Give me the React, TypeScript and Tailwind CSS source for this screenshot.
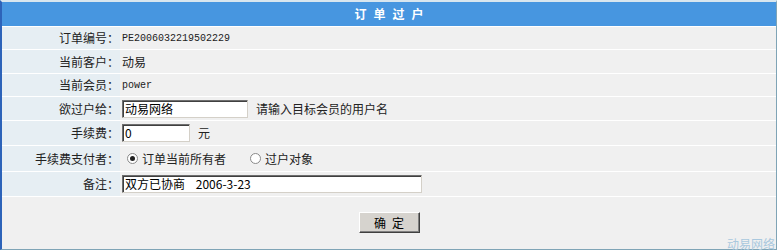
import React from "react";

const cjk = "font-['SimSun','Noto_Sans_CJK_SC',sans-serif]";

function Row({
  label,
  h,
  children,
}: {
  label: string;
  h: string;
  children: React.ReactNode;
}) {
  return (
    <div className={`flex ${h}`}>
      <div className="w-[118px] shrink-0 bg-[#e6eef3] flex items-center justify-end pr-[1px] text-[12px] text-[#222]">
        {label}
      </div>
      <div className="flex-1 bg-[#f0f0f0] flex items-center pl-[2px] text-[12px] text-[#222]">
        {children}
      </div>
    </div>
  );
}

function Radio({ checked }: { checked?: boolean }) {
  return (
    <span className="inline-flex items-center justify-center w-[11px] h-[11px] rounded-full border border-[#8a8a8a] bg-white mr-[4px]">
      {checked && <span className="w-[5px] h-[5px] rounded-full bg-[#222]" />}
    </span>
  );
}

export default function App() {
  return (
    <div className={`w-[780px] h-[251px] bg-white ${cjk}`}>
      <div className="relative w-[777px] h-[250px] border-l-2 border-l-[#2d63b9] border-t-2 border-t-[#d8e6ef] border-r border-r-[#7fa4b6] border-b border-b-[#7fa4b6] bg-white flex flex-col">
        <div className="h-[24px] bg-[#4796e0] flex items-center justify-center pl-[7px] text-white font-bold text-[12px] tracking-[7px]">
          订单过户
        </div>
        <div className="flex flex-col gap-px pt-px">
          <Row label="订单编号：" h="h-[22px]">
            <span className="font-['Liberation_Mono',monospace] text-[10px]">PE2006032219502229</span>
          </Row>
          <Row label="当前客户：" h="h-[23px]">动易</Row>
          <Row label="当前会员：" h="h-[22px]">
            <span className="font-['Liberation_Mono',monospace] text-[10px]">power</span>
          </Row>
          <Row label="欲过户给：" h="h-[23px]">
            <input
              readOnly
              value="动易网络"
              className="w-[126px] h-[18px] bg-white border border-t-[#6e6e6e] border-l-[#6e6e6e] border-r-[#d4d0c8] border-b-[#d4d0c8] shadow-[inset_1px_1px_0_#404040] px-[2px] text-[12px] text-black outline-none"
            />
            <span className="ml-[8px]">请输入目标会员的用户名</span>
          </Row>
          <Row label="手续费：" h="h-[24px]">
            <input
              readOnly
              value="0"
              className="w-[68px] h-[18px] bg-white border border-t-[#6e6e6e] border-l-[#6e6e6e] border-r-[#d4d0c8] border-b-[#d4d0c8] shadow-[inset_1px_1px_0_#404040] px-[2px] text-[12px] text-black outline-none"
            />
            <span className="ml-[8px]">元</span>
          </Row>
          <Row label="手续费支付者：" h="h-[25px]">
            <span className="ml-[5px] inline-flex items-center">
              <Radio checked />
              订单当前所有者
            </span>
            <span className="ml-[24px] inline-flex items-center">
              <Radio />
              过户对象
            </span>
          </Row>
          <Row label="备注：" h="h-[24px]">
            <input
              readOnly
              value="双方已协商    2006-3-23"
              className="w-[300px] h-[18px] bg-white border border-t-[#6e6e6e] border-l-[#6e6e6e] border-r-[#d4d0c8] border-b-[#d4d0c8] shadow-[inset_1px_1px_0_#404040] px-[2px] text-[12px] text-black outline-none"
            />
          </Row>
        </div>
        <div className="mt-px flex-1 bg-[#f0f0f0] flex items-start justify-center pt-[15px]">
          <button className="w-[61px] h-[21px] bg-[#d6d3ce] border border-t-white border-l-white border-r-[#404040] border-b-[#404040] shadow-[inset_-1px_-1px_0_#808080] text-[12px] text-black tracking-[6px] pl-[6px]">
            确定
          </button>
        </div>
        <span className="absolute right-[1px] bottom-[-4px] text-[12px] text-[#a9c8de]">
          动易网络
        </span>
      </div>
    </div>
  );
}
